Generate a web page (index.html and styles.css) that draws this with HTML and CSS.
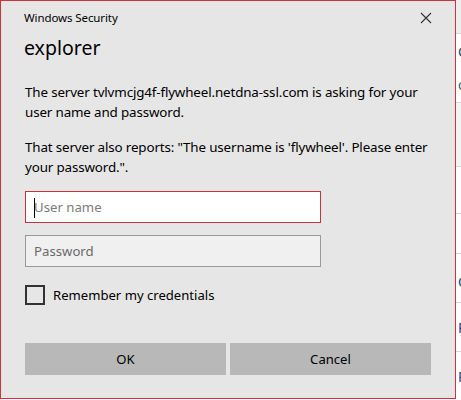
FILE: index.html
```html
<!DOCTYPE html>
<html>
<head>
<meta charset="utf-8">
<link rel="stylesheet" href="styles.css">
</head>
<body>
<div class="desktop">
  <div class="behind">
    <div class="brow top"></div>
    <div class="brow r1"><span>C</span><span class="low">o</span></div>
    <div class="brow r2"></div>
    <div class="brow r3"></div>
    <div class="brow r4a"></div>
    <div class="brow r4"><span>C</span></div>
    <div class="brow r5"><span>P</span></div>
    <div class="brow r6"><span>P</span></div>
  </div>
  <div class="dialog">
    <div class="titlebar">
      <span class="title">Windows Security</span>
      <svg class="close" width="12" height="12" viewBox="0 0 12 12"><path d="M1 1L11 11M11 1L1 11" stroke="#333" stroke-width="1.1" fill="none"/></svg>
    </div>
    <div class="heading">explorer</div>
    <p class="msg">The server tvlvmcjg4f-flywheel.netdna-ssl.com is asking for your<br>user name and password.</p>
    <p class="msg second">That server also reports: "The username is 'flywheel'. Please enter<br>your password.".</p>
    <div class="field active"><span class="caret"></span><span class="ph">User name</span></div>
    <div class="field pass"><span class="ph">Password</span></div>
    <div class="check"><span class="box"></span><span class="label">Remember my credentials</span></div>
    <div class="buttons">
      <div class="btn">OK</div>
      <div class="btn">Cancel</div>
    </div>
  </div>
</div>
</body>
</html>
```
FILE: styles.css
```css
html, body {
  margin: 0;
  padding: 0;
  background: #ffffff;
  overflow: hidden;
}
.desktop {
  position: relative;
  width: 461px;
  height: 400px;
  display: flex;
  justify-content: flex-end;
  font-family: "Noto Sans", "Open Sans", sans-serif;
  color: #000;
}
.behind {
  width: 40px;
  display: flex;
  flex-direction: column;
  font-size: 14px;
  color: #3a3a6a;
}
.brow {
  border-bottom: 1px solid #d8d8d8;
  display: flex;
  flex-direction: column;
  padding-left: 37px;
  box-sizing: border-box;
  line-height: 16px;
}
.brow.top { height: 34px; background: #eeeeee; border-bottom-color: #dcdcdc; }
.brow.r1 { height: 69px; padding-top: 10px; gap: 17px; }
.brow.r1 .low { color: #555; }
.brow.r2 { height: 64px; background: #f4f4f4; }
.brow.r3 { height: 47px; }
.brow.r4a { height: 40px; }
.brow.r4 { height: 49px; padding-top: 20px; }
.brow.r5 { height: 49px; padding-top: 17px; }
.brow.r6 { height: 48px; padding-top: 17px; border-bottom: none; }

.dialog {
  position: absolute;
  left: 0;
  top: 0;
  width: 456px;
  height: 399px;
  box-sizing: border-box;
  border: 1px solid #d0313f;
  background: #e6e6e6;
  padding: 0 23px 0 24px;
  display: flex;
  flex-direction: column;
}
.titlebar {
  height: 33px;
  display: flex;
  align-items: center;
  justify-content: space-between;
  margin-left: -1px;
}
.title {
  font-size: 11.5px;
  letter-spacing: -0.1px;
  color: #000;
}
.close {
  margin-right: 0;
  margin-top: 1px;
}
.heading {
  font-size: 19.5px;
  line-height: 28px;
  margin-left: -1px;
  color: #000;
}
.msg {
  margin: 20px 0 0 0;
  font-size: 13.4px;
  line-height: 20px;
  letter-spacing: -0.15px;
  color: #000;
  white-space: nowrap;
}
.msg.second { margin-top: 15px; }
.field {
  margin-top: 14px;
  width: 296px;
  height: 32px;
  box-sizing: border-box;
  border: 1px solid #999999;
  background: #f0f0f0;
  display: flex;
  align-items: center;
  padding-left: 8px;
  font-size: 13.2px;
  position: relative;
}
.field.active {
  border-color: #c8323f;
  background: #ffffff;
}
.field.pass {
  margin-top: 12px;
}
.field .ph { color: #7b7b7b; }
.field.pass .ph { color: #6a6a6a; }
.caret {
  position: absolute;
  left: 8px;
  top: 6px;
  width: 1px;
  height: 20px;
  background: #000;
}
.check {
  margin-top: 18px;
  display: flex;
  align-items: center;
  height: 20px;
}
.box {
  width: 20px;
  height: 20px;
  box-sizing: border-box;
  border: 2px solid #333333;
}
.label {
  margin-left: 8px;
  font-size: 13.1px;
  color: #000;
}
.buttons {
  margin-top: 38px;
  display: flex;
  gap: 4px;
}
.btn {
  width: 201px;
  height: 32px;
  background: #b8b8b8;
  display: flex;
  align-items: center;
  justify-content: center;
  font-size: 13.1px;
  color: #000;
}
```
